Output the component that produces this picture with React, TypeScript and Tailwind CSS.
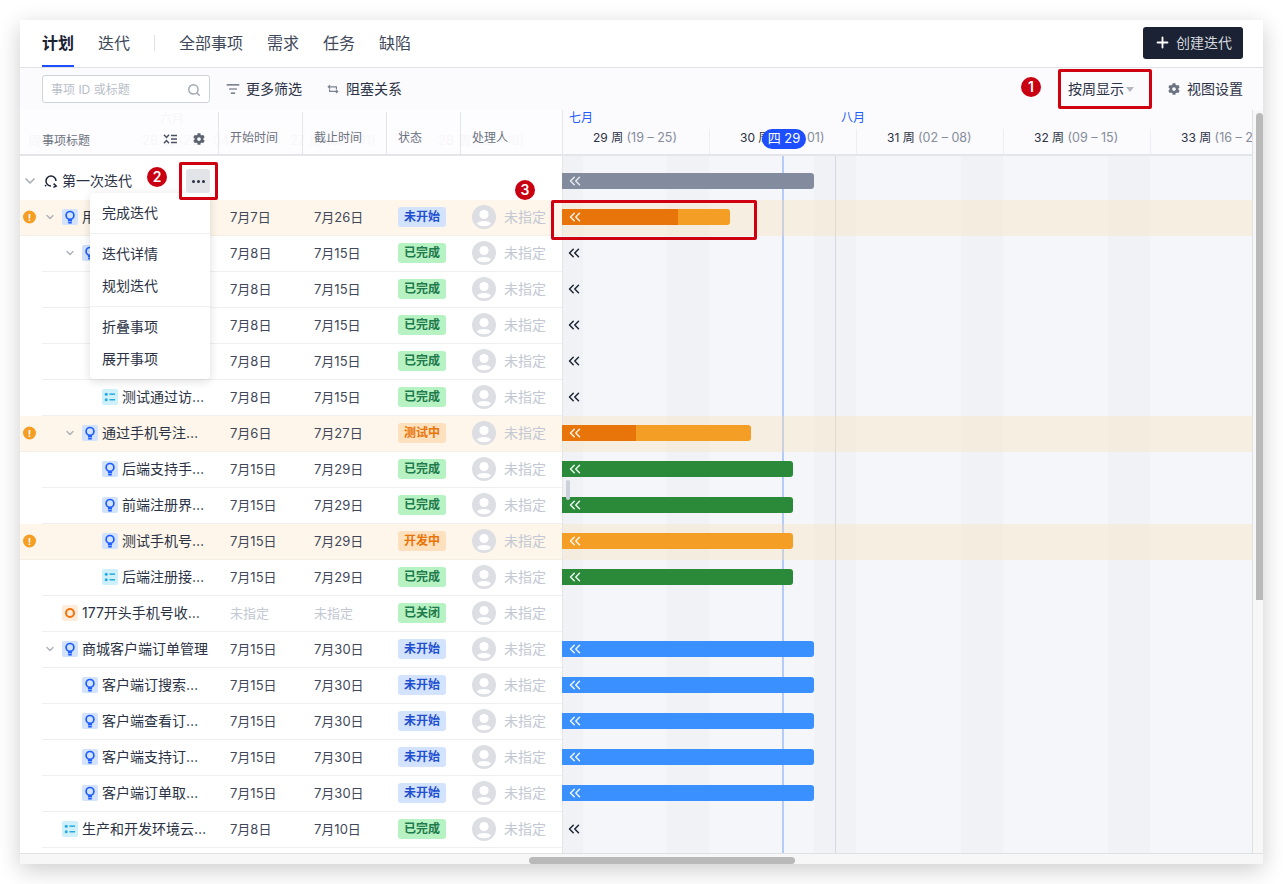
import { ChevronDown, ChevronsLeft, ListFilter, Plus, Search } from "lucide-react";
import { FaCog } from "react-icons/fa";

type Row = {
  level: number;
  type?: "story" | "task" | "bug";
  title?: string;
  start: string;
  end: string;
  status: string;
  warn?: boolean;
  arrow?: boolean;
  bar?: { color: string; width: number; done?: number };
};

const orange = "bg-[#f59e25]";

const rows: Row[] = [
  { level: 0, type: "story", title: "用户注册登录", start: "7月7日", end: "7月26日", status: "未开始", warn: true, arrow: true, bar: { color: orange, width: 168, done: 116 } },
  { level: 1, type: "story", title: "通过账号注册", start: "7月8日", end: "7月15日", status: "已完成", arrow: true },
  { level: 2, type: "story", title: "后端支持账号", start: "7月8日", end: "7月15日", status: "已完成" },
  { level: 2, type: "story", title: "前端注册界面", start: "7月8日", end: "7月15日", status: "已完成" },
  { level: 2, type: "task", title: "后端注册接口", start: "7月8日", end: "7月15日", status: "已完成" },
  { level: 2, type: "task", title: "测试通过访…", start: "7月8日", end: "7月15日", status: "已完成" },
  { level: 1, type: "story", title: "通过手机号注…", start: "7月6日", end: "7月27日", status: "测试中", warn: true, arrow: true, bar: { color: orange, width: 189, done: 74 } },
  { level: 2, type: "story", title: "后端支持手…", start: "7月15日", end: "7月29日", status: "已完成", bar: { color: "bg-[#2b8a3a]", width: 231 } },
  { level: 2, type: "story", title: "前端注册界…", start: "7月15日", end: "7月29日", status: "已完成", bar: { color: "bg-[#2b8a3a]", width: 231 } },
  { level: 2, type: "story", title: "测试手机号…", start: "7月15日", end: "7月29日", status: "开发中", warn: true, bar: { color: orange, width: 231 } },
  { level: 2, type: "task", title: "后端注册接…", start: "7月15日", end: "7月29日", status: "已完成", bar: { color: "bg-[#2b8a3a]", width: 231 } },
  { level: 0, type: "bug", title: "177开头手机号收…", start: "未指定", end: "未指定", status: "已关闭" },
  { level: 0, type: "story", title: "商城客户端订单管理", start: "7月15日", end: "7月30日", status: "未开始", arrow: true, bar: { color: "bg-[#3a90ff]", width: 252 } },
  { level: 1, type: "story", title: "客户端订搜索…", start: "7月15日", end: "7月30日", status: "未开始", bar: { color: "bg-[#3a90ff]", width: 252 } },
  { level: 1, type: "story", title: "客户端查看订…", start: "7月15日", end: "7月30日", status: "未开始", bar: { color: "bg-[#3a90ff]", width: 252 } },
  { level: 1, type: "story", title: "客户端支持订…", start: "7月15日", end: "7月30日", status: "未开始", bar: { color: "bg-[#3a90ff]", width: 252 } },
  { level: 1, type: "story", title: "客户端订单取…", start: "7月15日", end: "7月30日", status: "未开始", bar: { color: "bg-[#3a90ff]", width: 252 } },
  { level: 0, type: "task", title: "生产和开发环境云…", start: "7月8日", end: "7月10日", status: "已完成" },
];

const statusStyle: Record<string, string> = {
  未开始: "bg-[#d3e3fd] text-[#1f4fd0]",
  已完成: "bg-[#b6f2c2] text-[#1f7a4c]",
  已关闭: "bg-[#b6f2c2] text-[#1f7a4c]",
  测试中: "bg-[#fde0bd] text-[#e8750a]",
  开发中: "bg-[#fde0bd] text-[#e8750a]",
};

const weeks = [
  { no: "29 周", range: "(19 – 25)" },
  { no: "30 周", range: "(26 – 01)" },
  { no: "31 周", range: "(02 – 08)" },
  { no: "32 周", range: "(09 – 15)" },
  { no: "33 周", range: "(16 – 22)" },
];

function TypeIcon({ type }: { type: Row["type"] }) {
  if (type === "task") {
    return (
      <span className="flex h-4 w-4 shrink-0 items-center justify-center rounded-[2px] bg-[#cdf0fb]">
        <svg viewBox="0 0 16 16" className="h-4 w-4" fill="#27a9e0">
          <circle cx="4.2" cy="5.2" r="1.5" />
          <circle cx="4.2" cy="10.8" r="1.5" />
          <rect x="7.5" y="4.4" width="5.5" height="1.5" />
          <rect x="7.5" y="10" width="5.5" height="1.5" />
        </svg>
      </span>
    );
  }
  if (type === "bug") {
    return (
      <span className="flex h-4 w-4 shrink-0 items-center justify-center rounded-[2px] bg-[#fdecd9]">
        <span className="h-[10px] w-[10px] rounded-full border-2 border-[#f0730f]" />
      </span>
    );
  }
  return (
    <span className="flex h-4 w-4 shrink-0 items-center justify-center rounded-[2px] bg-[#d3e3fd]">
      <svg viewBox="0 0 16 16" className="h-4 w-4" fill="none" stroke="#1d5cff" strokeWidth="1.7">
        <circle cx="8" cy="6.4" r="3.9" />
        <path d="M6.8 10.5v1h2.4v-1M6.2 13.6h3.6" />
      </svg>
    </span>
  );
}

function Avatar() {
  return (
    <svg viewBox="0 0 24 24" className="h-6 w-6 shrink-0">
      <circle cx="12" cy="12" r="12" fill="#dcdee3" />
      <circle cx="12" cy="9.5" r="4.6" fill="#fff" />
      <ellipse cx="12" cy="18.6" rx="6.6" ry="2.7" fill="#fff" />
    </svg>
  );
}

function TitleCell({ row }: { row: Row }) {
  const indent = ["ml-[24px]", "ml-[44px]", "ml-[64px]"][row.level];
  return (
    <div className="relative flex w-[198px] shrink-0 items-center">
      {row.warn && (
        <span className="absolute left-[3px] top-1/2 flex h-[13px] w-[13px] -translate-y-1/2 items-center justify-center rounded-full bg-[#f59e25] text-[9px] font-bold leading-none text-white">
          !
        </span>
      )}
      <span className={`${indent} flex w-3 shrink-0 items-center justify-center`}>
        {row.arrow && <ChevronDown size={16} strokeWidth={2.5} className="text-[#a9adb6]" />}
      </span>
      <span className="ml-[6px]">
        <TypeIcon type={row.type} />
      </span>
      <span className="ml-1 whitespace-nowrap text-sm text-[#2a3244]">{row.title}</span>
    </div>
  );
}

function TableRow({ row }: { row: Row }) {
  const unset = row.start === "未指定";
  return (
    <div className={`relative flex h-9 pb-[2px] ${row.warn ? "bg-[#fef6ea]" : ""}`}>
      <TitleCell row={row} />
      <div className="flex flex-1 items-center">
        <span className={`w-[84px] pl-3 pt-px text-[13px] ${unset ? "text-[#c3c8d3]" : "text-[#40485a]"}`}>{row.start}</span>
        <span className={`w-[84px] pl-3 pt-px text-[13px] ${unset ? "text-[#c3c8d3]" : "text-[#40485a]"}`}>{row.end}</span>
        <span className="flex w-[74px] pl-3">
          <span className={`flex h-5 w-12 items-center justify-center rounded-[3px] text-xs font-semibold ${statusStyle[row.status]}`}>
            {row.status}
          </span>
        </span>
        <span className="flex items-center gap-2 pl-3">
          <Avatar />
          <span className="whitespace-nowrap text-sm text-[#c3c8d3]">未指定</span>
        </span>
      </div>
      <div className={`absolute bottom-0 right-0 h-px ${row.warn ? "left-0 bg-[#f3eee6]" : "left-[22px] bg-[#eeeff2]"}`} />
    </div>
  );
}

function Chevrons({ className }: { className: string }) {
  return <ChevronsLeft size={18} strokeWidth={2} className={className} />;
}

function GanttRow({ row }: { row: Row }) {
  const noBar = !row.bar && row.status === "已完成";
  return (
    <div className={`relative flex h-9 items-center pb-[2px] ${row.warn ? "bg-[#fbdeaa]/30" : ""}`}>
      {row.bar && (
        <div className={`relative -ml-px flex h-4 items-center overflow-hidden rounded-r-[3px] ${row.bar.color}`} style={{ width: row.bar.width }}>
          {row.bar.done && <div className="absolute inset-y-0 left-0 bg-[#e8750a]" style={{ width: row.bar.done }} />}
          <Chevrons className="relative ml-1 text-white/90" />
        </div>
      )}
      {noBar && <Chevrons className="ml-[2px] text-[#1f2633]" />}
    </div>
  );
}

export default function App() {
  return (
    <div className="h-[884px] w-[1283px] overflow-hidden bg-white pl-5 pt-5 font-['Inter','Noto_Sans_CJK_SC',sans-serif]">
      <div className="relative flex h-[844px] w-[1243px] flex-col bg-white shadow-[0_6px_22px_rgba(0,0,0,0.2)]">
        {/* TABS */}
        <header className="flex h-12 shrink-0 items-center border-b border-[#e1e2e8] pb-[2px] pl-[22px] pr-5">
          <div className="relative flex h-full items-center text-base font-semibold text-[#1a2233]">
            计划
            <span className="absolute inset-x-0 -bottom-0.5 h-0.5 bg-[#1d4fff]" />
          </div>
          <span className="ml-6 text-base text-[#40485a]">迭代</span>
          <span className="ml-6 h-4 w-px bg-[#e1e2e8]" />
          <nav className="ml-6 flex gap-6 text-base text-[#40485a]">
            <span>全部事项</span>
            <span>需求</span>
            <span>任务</span>
            <span>缺陷</span>
          </nav>
          <button type="button" className="ml-auto flex h-8 w-[100px] items-center justify-center gap-[5px] rounded-[3px] bg-[#1a2233] text-sm text-[#d5d8de]">
            <Plus size={17} strokeWidth={2.6} className="text-white" />
            创建迭代
          </button>
        </header>

        {/* TOOLBAR */}
        <div className="flex h-[42px] shrink-0 items-center bg-[#fbfafd] pl-[22px] pr-5">
          <div className="flex h-7 w-[168px] items-center justify-between rounded-[3px] border border-[#cfd3da] bg-white pl-2 pr-2 pt-px text-xs text-[#b9bec9]">
            事项 ID 或标题
            <Search size={14} strokeWidth={2.5} className="text-[#a4a8b2]" />
          </div>
          <ListFilter size={14} className="ml-4 text-[#565d6c]" />
          <span className="ml-[6px] text-sm text-[#2a3244]">更多筛选</span>
          <svg viewBox="0 0 14 14" className="ml-[25px] h-3 w-3" fill="none" stroke="#7b8290" strokeWidth="1.4">
            <path d="M1.5 4.5H11v2.4M3.6 2.4 1.5 4.5l2.1 2.1" />
            <path d="M12.5 9.8H3V7.4M10.4 11.9l2.1-2.1-2.1-2.1" />
          </svg>
          <span className="ml-[7px] text-sm text-[#2a3244]">阻塞关系</span>
          <span className="ml-auto text-sm text-[#2a3244]">按周显示</span>
          <span className="ml-[2px] mt-px h-0 w-0 border-x-4 border-t-[5px] border-x-transparent border-t-[#b4b8c0]" />
          <FaCog size={12} className="ml-[34px] text-[#6b7280]" />
          <span className="ml-[7px] text-sm text-[#2a3244]">视图设置</span>
        </div>

        {/* TABLE + GANTT */}
        <div className="flex min-h-0 flex-1">
          <div className="relative flex w-[543px] shrink-0 flex-col border-r border-[#e4e5e9]">
            {/* ghost of the scrolled timeline under the header */}
            <div className="absolute left-[8px] top-[21px] text-[13px] text-[#f0f1f4]">周</div>
            <div className="absolute left-[140px] top-[1px] text-xs text-[#f0f1f4]">六月</div>
            <div className="absolute left-[122px] top-[21px] whitespace-nowrap text-[13px] text-[#f0f1f4]">26 周 (28 – 04)</div>
            <div className="absolute left-[270px] top-[21px] whitespace-nowrap text-[13px] text-[#f0f1f4]">27 周 (05 – 11)</div>
            <div className="absolute left-[418px] top-[21px] whitespace-nowrap text-[13px] text-[#f0f1f4]">28 周 (12 – 18)</div>

            <div className="relative flex h-[46px] shrink-0 items-end border-b-2 border-[#e4e5e9] bg-[#fbfafd]/60 text-xs text-[#6b7280]">
              <div className="flex h-full w-[198px] items-center pl-[22px] pt-[17px]">
                <span>事项标题</span>
                <svg viewBox="0 0 14 10" className="-mt-1 ml-[73px] h-[10px] w-[14px]" fill="none" stroke="#4b5262" strokeWidth="1.5">
                  <path d="M1 .8l2.5 2.6L6 .8M1 9.2l2.5-2.6L6 9.2M8 1.5h6M8 5h6M8 8.5h6" />
                </svg>
                <FaCog size={12} className="-mt-1 ml-[16px] text-[#5c6371]" />
              </div>
              <div className="flex h-[42px] w-[84px] items-center border-l border-[#e4e5e9] pl-[11px] pt-[9px]">开始时间</div>
              <div className="flex h-[42px] w-[84px] items-center border-l border-[#e4e5e9] pl-[11px] pt-[9px]">截止时间</div>
              <div className="flex h-[42px] w-[74px] items-center border-l border-[#e4e5e9] pl-[11px] pt-[9px]">状态</div>
              <div className="flex h-[42px] flex-1 items-center border-l border-[#e4e5e9] pl-[11px] pt-[9px]">处理人</div>
            </div>

            <div className="flex h-11 shrink-0 items-center pt-[6px]">
              <ChevronDown size={16} strokeWidth={2.5} className="ml-[2px] text-[#a9adb6]" />
              <svg viewBox="0 0 16 16" className="ml-[5px] h-4 w-4" fill="none" stroke="#1a2233" strokeWidth="1.5">
                <path d="M13 8a5 5 0 1 0-5 5" />
                <path d="M10.6 10.6 13.2 13l-2.8 1.4" />
                <circle cx="2.6" cy="12.6" r="0.9" fill="#1a2233" stroke="none" />
              </svg>
              <span className="ml-[3px] text-sm text-[#2a3244]">第一次迭代</span>
            </div>

            {rows.map((row, i) => (
              <TableRow key={i} row={row} />
            ))}
          </div>

          <div className="flex min-w-0 flex-1 flex-col">
            <div className="relative h-[46px] shrink-0 overflow-hidden border-b-2 border-[#e4e5e9] bg-[#fbfafd]">
              <div className="flex h-[19px] text-xs leading-[15px] text-[#1d5cff]">
                <span className="w-[272px] pl-[6px]">七月</span>
                <span className="pl-[6px]">八月</span>
              </div>
              <div className="flex h-[25px] w-[900px]">
                {weeks.map((week) => (
                  <div key={week.no} className="w-[147px] shrink-0 whitespace-nowrap border-r border-[#eceef2] pl-[30px] text-xs leading-[18px] text-[#2a3244]">
                    {week.no} <span className="text-[12.5px] text-[#858c9a]">{week.range}</span>
                  </div>
                ))}
              </div>
            </div>

            <div className="relative min-h-0 flex-1 bg-[#f4f6fa]">
              <div className="absolute inset-y-0 left-0 w-5 bg-[#f0f2f6]" />
              <div className="absolute inset-y-0 left-[104px] w-[42px] bg-[#f0f2f6]" />
              <div className="absolute inset-y-0 left-[251px] w-[42px] bg-[#f0f2f6]" />
              <div className="absolute inset-y-0 left-[398px] w-[42px] bg-[#f0f2f6]" />
              <div className="absolute inset-y-0 left-[545px] w-[42px] bg-[#f0f2f6]" />
              <div className="absolute inset-y-0 left-[272px] w-px bg-[#d6d8dd]" />
              <div className="absolute inset-y-0 left-[219px] w-0.5 bg-[#b7cbf7]" />
              <div className="relative flex h-11 items-center pt-[6px]">
                <div className="-ml-px flex h-4 w-[252px] items-center rounded-r-[3px] bg-[#828c9e]">
                  <Chevrons className="ml-1 text-white/80" />
                </div>
              </div>
              {rows.map((row, i) => (
                <GanttRow key={i} row={row} />
              ))}
            </div>
          </div>

          <div className="w-[11px] shrink-0 border-l border-[#e0e1e5] bg-[#f7f7f7]" />
        </div>

        {/* BOTTOM SCROLL TRACK */}
        <div className="h-[11px] shrink-0 border-t border-[#e0e1e5] bg-[#f7f7f7]" />

        {/* scrollbars */}
        <div className="absolute left-[509px] top-[837px] h-[7px] w-[266px] rounded-full bg-[#b9b9b9]" />
        <div className="absolute left-[1236px] top-[93px] h-[487px] w-[7px] rounded-t-full bg-[#b9b9b9]" />
        <div className="absolute left-[546px] top-[460px] h-5 w-1 rounded-full bg-[#ccd0d8]" />

        {/* today */}
        <div className="absolute left-[742px] top-[109px] flex h-5 w-11 items-center justify-center rounded-full bg-[#1d4fff] text-[13px] text-white">
          四 29
        </div>

        {/* ROW MENU */}
        <div className="absolute left-[70px] top-[173px] flex w-[120px] flex-col rounded bg-white text-sm text-[#2a3244] shadow-[0_2px_10px_rgba(0,0,0,0.14)]">
          <span className="flex h-[41px] items-center border-b border-[#eeeff2] pl-3">完成迭代</span>
          <span className="mt-1 flex h-8 items-center pl-3">迭代详情</span>
          <span className="flex h-8 items-center pl-3">规划迭代</span>
          <span className="mt-1 flex h-[37px] items-center border-t border-[#eeeff2] pl-3 pt-[4px]">折叠事项</span>
          <span className="mb-1 flex h-8 items-center pl-3">展开事项</span>
        </div>

        {/* more button */}
        <div className="absolute left-[166px] top-[149px] flex h-6 w-6 items-center justify-center rounded-[3px] bg-[#e2e4e8] text-[#2a3244]">
          <span className="flex gap-[2px]">
            <span className="h-[3px] w-[3px] rounded-full bg-current" />
            <span className="h-[3px] w-[3px] rounded-full bg-current" />
            <span className="h-[3px] w-[3px] rounded-full bg-current" />
          </span>
        </div>

        {/* ANNOTATIONS */}
        <div className="absolute left-[1038px] top-[49px] h-[40px] w-[94px] rounded-[2px] border-[3px] border-[#cf0010]" />
        <div className="absolute left-[159px] top-[142px] h-[38px] w-[39px] rounded-[2px] border-[3px] border-[#cf0010]" />
        <div className="absolute left-[531px] top-[180px] h-[40px] w-[206px] rounded-[2px] border-[3px] border-[#cf0010]" />
        <div className="absolute left-[1001px] top-[57px] flex h-5 w-5 items-center justify-center rounded-full bg-[#c90012] text-sm font-semibold text-white">1</div>
        <div className="absolute left-[127px] top-[147px] flex h-5 w-5 items-center justify-center rounded-full bg-[#c90012] text-sm font-semibold text-white">2</div>
        <div className="absolute left-[495px] top-[160px] flex h-5 w-5 items-center justify-center rounded-full bg-[#c90012] text-sm font-semibold text-white">3</div>
      </div>
    </div>
  );
}
